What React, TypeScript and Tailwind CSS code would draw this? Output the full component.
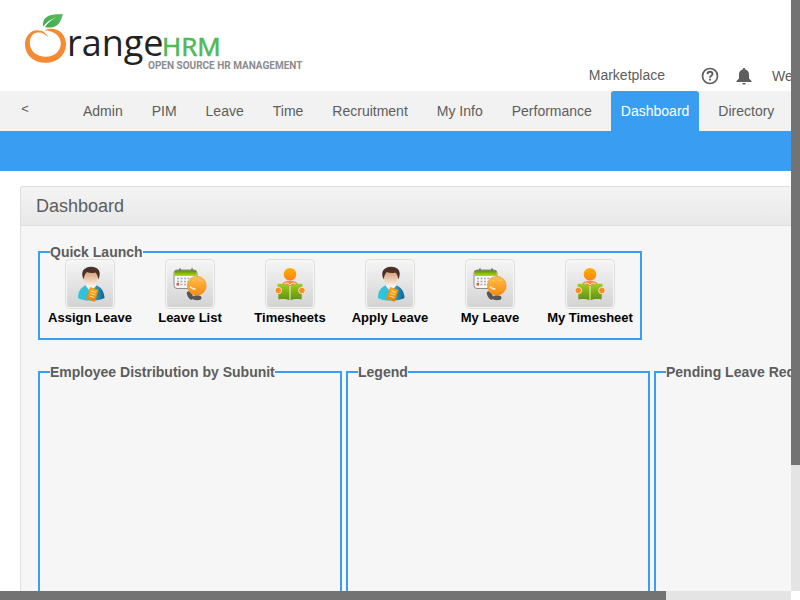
import React from "react";

const menuItems = [
  "Admin",
  "PIM",
  "Leave",
  "Time",
  "Recruitment",
  "My Info",
  "Performance",
  "Dashboard",
  "Directory",
];

type LaunchKind = "person" | "calendar" | "reader";

const shortcuts: { label: string; kind: LaunchKind }[] = [
  { label: "Assign Leave", kind: "person" },
  { label: "Leave List", kind: "calendar" },
  { label: "Timesheets", kind: "reader" },
  { label: "Apply Leave", kind: "person" },
  { label: "My Leave", kind: "calendar" },
  { label: "My Timesheet", kind: "reader" },
];

const panels = ["Employee Distribution by Subunit", "Legend", "Pending Leave Requests"];

function Logo() {
  return (
    <svg width="310" height="80" viewBox="0 0 310 80" role="img" aria-label="OrangeHRM">
      <defs>
        <linearGradient id="leaf" x1="0" y1="1" x2="1" y2="0">
          <stop offset="0" stopColor="#3fa648" />
          <stop offset="1" stopColor="#5cbf62" />
        </linearGradient>
      </defs>
      <path
        d="M48 37.500C46.500 33 42.500 30.200 37.500 30.200C30 30.200 25 36.500 25 44.500C25 55 33.500 62.800 45.500 62.800C57.500 62.800 66 54.500 66 44.500C66 35.500 60 28.800 51 28.800C48.500 28.800 46 29.300 44.800 30.300C55 31 60.800 36.500 60.800 43.500C60.800 51 54.500 56.800 46 56.800C36.800 56.800 29.800 51 29.800 43C29.800 37 33 32.800 38 32.600C42.500 32.400 45.500 34.500 48 37.500Z"
        fill="#f58a33"
      />
      <path
        d="M43.300 26.500C42 20 46 15.500 54 14.600C57.500 14.200 60 14.300 62.800 13.800C61.500 21 58.500 26.800 51 27.400C48.800 27.600 47 27.500 45 27C48 22.500 52 19.500 56.500 17.300C50.500 19.300 46.500 22 43.300 26.500Z"
        fill="url(#leaf)"
      />
      <text x="67" y="56" className="fill-[#222222] font-['Open_Sans'] text-[36px]">range</text>
      <text x="162" y="56" className="fill-[#4db856] stroke-[#4db856] font-['Open_Sans'] text-[26px]" strokeWidth=".6">
        HRM
      </text>
      <text x="148" y="69" className="fill-[#8a8c8e] font-['Roboto'] text-[10px] font-bold">
        OPEN SOURCE HR MANAGEMENT
      </text>
    </svg>
  );
}

function HelpIcon() {
  return (
    <svg width="18" height="18" viewBox="0 0 18 18" fill="none" stroke="#5d5d5d" aria-hidden="true">
      <circle cx="9" cy="9" r="7.500" strokeWidth="1.700" />
      <path d="M6.500 7.300C6.500 5.700 7.500 4.800 9 4.800S11.500 5.700 11.500 7C11.500 8.800 9 8.700 9 10.700" strokeWidth="1.900" />
      <path d="M9 11.800V13.600" strokeWidth="2" />
    </svg>
  );
}

function BellIcon() {
  return (
    <svg width="16" height="18" viewBox="0 0 16 18" fill="#5d5d5d" aria-hidden="true">
      <path d="M8 1C8.900 1 9.300 1.600 9.300 2.400C11.800 3 13 5 13 7.500V11.500L15.500 14V15H.500V14L3 11.500V7.500C3 5 4.200 3 6.700 2.400C6.700 1.600 7.100 1 8 1Z" />
      <path d="M6.200 16H9.800C9.600 17 9 17.500 8 17.500S6.400 17 6.200 16Z" />
    </svg>
  );
}

function PersonArt() {
  return (
    <g>
      <path d="M13 39C13 32 16 28 21.500 26H30C36 27.500 39 32 39.500 39C35 41 32 41.500 26 41.500S16 41 13 39Z" fill="url(#shirt)" />
      <path d="M20.500 26.500L25.500 33L31.500 26.500L28.500 24.500H23.500Z" fill="#eef5f8" />
      <path d="M18.500 16C18.500 10.500 21.500 9 26 9S33 11 33 16C33 22 30 27.500 26 27.500S18.500 22 18.500 16Z" fill="url(#skin)" />
      <path d="M18.800 20.500C14.800 13 19 8 26 7.800C33.500 7.800 37 13 33.300 20.500C33 18 32.300 15.500 30.500 13.500C27 14.500 24 14 21.800 13C20 14.500 19 17.500 18.800 20.500Z" fill="#4c3028" />
      <path d="M25.300 28.500L33.300 31L29.500 42.500L21.300 39.500Z" fill="url(#paper)" stroke="#e9870b" strokeWidth=".6" />
      <path d="M26.300 32L31 33.500M25.500 34.500L30.200 36M24.600 37L29.300 38.500" stroke="#ffe68a" strokeWidth="1" />
    </g>
  );
}

function CalendarArt() {
  return (
    <g>
      <rect x="9" y="11" width="23" height="18.500" rx="3" fill="#f7f7f7" stroke="#8a8c8e" />
      <path d="M9.500 17V14C9.500 12.300 10.500 11.300 12 11.300H29C30.500 11.300 31.500 12.300 31.500 14V17Z" fill="url(#calTop)" />
      <path d="M15 9.500V12M27 9.500V12" stroke="#777" strokeWidth="2" />
      <path d="M12 19.500H30M12 22.500H30M12 25.500H28" stroke="#aaa" strokeWidth="1.500" strokeDasharray="2 1.500" />
      <rect x="11.500" y="24" width="2.500" height="2.500" fill="#e2593f" />
      <ellipse cx="25" cy="36.500" rx="2.400" ry="4.500" transform="rotate(-30 25 36.500)" fill="#55565a" />
      <ellipse cx="32" cy="38.700" rx="4.500" ry="2.500" fill="#55565a" />
      <circle cx="31.800" cy="26.700" r="9.500" fill="url(#ball)" stroke="#e98a20" strokeWidth=".5" />
      <path d="M25 27.500C26.500 29.500 28 30 30.500 30" fill="none" stroke="#fff1c4" strokeWidth="1.500" />
      <path d="M27.500 21.500L29 22M33.500 21L35.500 21.500" stroke="#ffd27a" />
    </g>
  );
}

function ReaderArt() {
  return (
    <g>
      <circle cx="25" cy="15.300" r="6.300" fill="url(#head)" />
      <path d="M17 25C18.500 22.800 21 21.800 25 21.800S31.500 22.800 33 25L25 27.500Z" fill="#fb8b45" />
      <path d="M19.500 24.500C22 23.500 24 24.500 25 26C26 24.500 28 23.500 30.500 24.500" fill="none" stroke="#ffe1c1" />
      <path d="M12.500 25C17 24.500 21 25 25 27.300C29 25 33 24.500 37.500 25L36.500 40.500C32 39.800 29 40 25 41.300C21 40 18 39.800 13.500 40.500Z" fill="url(#book)" />
      <path d="M25 27V41.500" stroke="#edf5ce" />
      <circle cx="13.300" cy="31.500" r="3.300" fill="#fb8e1e" stroke="#f3f3ec" strokeWidth=".8" />
      <circle cx="36.900" cy="31.500" r="3.300" fill="#fb8e1e" stroke="#f3f3ec" strokeWidth=".8" />
    </g>
  );
}

function LaunchIcon({ kind }: { kind: LaunchKind }) {
  return (
    <svg width="50" height="50" viewBox="0 0 50 50" aria-hidden="true">
      <rect x=".5" y=".5" width="49" height="49" rx="4" fill="#f7f7f5" stroke="#deded9" />
      <rect x="2" y="2" width="46" height="46" rx="3" fill="url(#tile)" />
      {kind === "person" && <PersonArt />}
      {kind === "calendar" && <CalendarArt />}
      {kind === "reader" && <ReaderArt />}
    </svg>
  );
}

/** Gradients shared by every quick launch icon. */
function IconGradients() {
  const fills: [string, string, string][] = [
    ["tile", "#f5f5f5", "#d3d3d3"],
    ["skin", "#c98b60", "#fff3e6"],
    ["paper", "#ffab19", "#f07e08"],
    ["calTop", "#568a12", "#b4e000"],
    ["ball", "#ffc04b", "#f78a10"],
    ["head", "#ffb000", "#fb8418"],
    ["book", "#9fce20", "#5f8f0e"],
  ];
  return (
    <svg width="0" height="0" className="absolute" aria-hidden="true">
      <defs>
        {fills.map(([id, from, to]) => (
          <linearGradient key={id} id={id} x1="0" y1="0" x2="0" y2="1">
            <stop offset="0" stopColor={from} />
            <stop offset="1" stopColor={to} />
          </linearGradient>
        ))}
        <linearGradient id="shirt" x1="0" y1="0" x2="1" y2="0">
          <stop offset="0" stopColor="#2cc8df" />
          <stop offset=".5" stopColor="#35bbdc" />
          <stop offset="1" stopColor="#0d5f91" />
        </linearGradient>
      </defs>
    </svg>
  );
}

export default function App() {
  return (
    <div className="grid h-screen grid-cols-[minmax(0,1fr)_9px] grid-rows-[minmax(0,1fr)_9px] bg-white font-['Liberation_Sans',Arial,sans-serif] text-sm text-[#5d5d5d]">
      <IconGradients />
      <div className="overflow-hidden whitespace-nowrap">
        <header className="flex h-[91px] justify-between">
          <a href="#" className="shrink-0">
            <Logo />
          </a>
          <div className="-mr-16 mb-[5px] flex h-5 shrink-0 items-center self-end">
            <a href="#" className="mb-[2px] mr-9">Marketplace</a>
            <button type="button" aria-label="Help" className="mr-[17px]">
              <HelpIcon />
            </button>
            <button type="button" aria-label="Notifications" className="mr-5">
              <BellIcon />
            </button>
            <a href="#" className="w-[83px]">Welcome Admin</a>
          </div>
        </header>

        <nav className="flex h-10 bg-[#f2f2f2]">
          <button type="button" aria-label="Scroll menu back" className="mb-1 ml-[21px] mr-11 w-2 text-[13px]">
            &lt;
          </button>
          <ul className="flex gap-[9px]">
            {menuItems.map((item) => (
              <li key={item} className="shrink-0">
                <a
                  href="#"
                  className={
                    item === "Dashboard"
                      ? "block rounded-t-[3px] bg-[#399ef2] px-[10px] leading-10 text-white"
                      : "block px-[10px] leading-10"
                  }
                >
                  {item}
                </a>
              </li>
            ))}
          </ul>
        </nav>
        <div className="h-10 bg-[#399ef2]" />

        <main className="ml-5 mt-[15px] rounded-t-[3px] border border-r-0 border-[#dedede] bg-[#f6f6f6]">
          <h1 className="h-[39px] rounded-tl-[3px] border-b border-[#dedede] bg-linear-to-b from-[#f4f4f4] to-[#e8e8e8] pl-[15px] text-[18px] leading-[38px]">
            Dashboard
          </h1>
          <div className="flex flex-col gap-[25px] pl-[17px] pt-[19px]">
            <fieldset className="h-[95px] w-[604px] border-2 border-[#399ef2]">
              <legend className="ml-[10px] font-bold leading-[14px]">Quick Launch</legend>
              <div className="grid grid-cols-6">
                {shortcuts.map(({ label, kind }) => (
                  <a key={label} href="#" className="flex flex-col items-center text-[13px] font-bold leading-[18px] text-black">
                    <LaunchIcon kind={kind} />
                    <span>{label}</span>
                  </a>
                ))}
              </div>
            </fieldset>
            <div className="flex gap-1">
              {panels.map((title) => (
                <fieldset key={title} className="h-[320px] w-[304px] shrink-0 border-2 border-[#399ef2]">
                  <legend className="ml-[10px] font-bold leading-[14px]">{title}</legend>
                </fieldset>
              ))}
            </div>
          </div>
        </main>
      </div>

      <div className="bg-[#e4e4e4]">
        <div className="h-[465px] bg-[#737373]" />
      </div>
      <div className="bg-[#e4e4e4]">
        <div className="h-full w-[666px] bg-[#737373]" />
      </div>
    </div>
  );
}
